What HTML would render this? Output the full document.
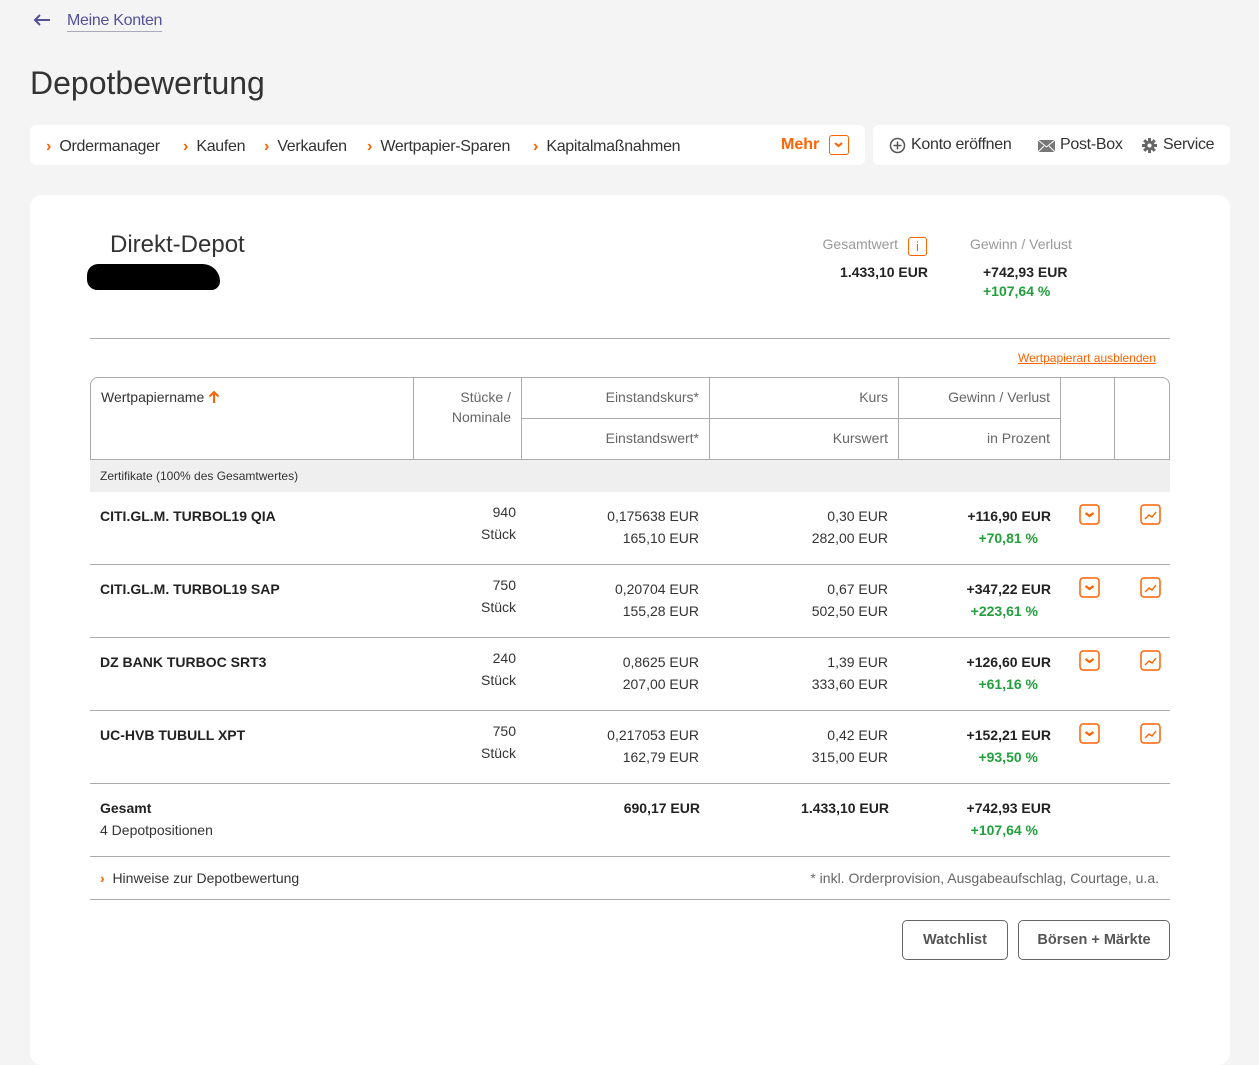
<!DOCTYPE html>
<html><head><meta charset="utf-8">
<style>
*{margin:0;padding:0;box-sizing:border-box}
body{width:1259px;height:1051px;background:#f4f4f4;font-family:"Liberation Sans",sans-serif;color:#333;position:relative;overflow:hidden;font-size:14px}
.a{position:absolute;white-space:nowrap;line-height:22px}
.r{text-align:right}
.b{font-weight:bold;color:#222}
.g{color:#22a03c;font-weight:bold}
.o{color:#ff6200}
.gr{color:#666}
.box{position:absolute;background:#fff}
.hl{position:absolute;height:1px;background:#aaa}
.vl{position:absolute;width:1px;background:#aaa}
.ib{position:absolute;width:20px;height:20px;border:1.5px solid #ff6200;border-radius:3px}
.btn{position:absolute;border:1px solid #666;border-radius:5px;background:#fff;font-weight:bold;color:#555;text-align:center;line-height:38px;font-size:14.5px}
.nv{font-size:16px;letter-spacing:-0.3px}
</style></head><body>

<svg style="position:absolute;left:33px;top:13px" width="18" height="14" viewBox="0 0 18 14"><path d="M17 7H2M7 2L2 7l5 5" stroke="#525199" stroke-width="2" fill="none"/></svg>
<div class="a" style="left:67px;top:10px;color:#525199;font-size:16px;border-bottom:1px solid #aab;line-height:21px;letter-spacing:-0.3px">Meine Konten</div>
<div class="a" style="left:30px;top:64px;font-size:32px;line-height:38px;color:#333">Depotbewertung</div>

<div class="box" style="left:30px;top:125px;width:835px;height:40px;border-radius:6px"></div>
<div class="a nv" style="left:46px;top:136px"><span class="o" style="font-weight:bold">›</span>&nbsp; Ordermanager</div>
<div class="a nv" style="left:183px;top:136px"><span class="o" style="font-weight:bold">›</span>&nbsp; Kaufen</div>
<div class="a nv" style="left:264px;top:136px"><span class="o" style="font-weight:bold">›</span>&nbsp; Verkaufen</div>
<div class="a nv" style="left:367px;top:136px"><span class="o" style="font-weight:bold">›</span>&nbsp; Wertpapier-Sparen</div>
<div class="a nv" style="left:533px;top:136px"><span class="o" style="font-weight:bold">›</span>&nbsp; Kapitalmaßnahmen</div>
<div class="a o" style="left:781px;top:134px;font-size:16px;font-weight:bold">Mehr</div>
<div class="ib" style="left:829px;top:135px"><svg width="17" height="17" viewBox="0 0 17 17" style="position:absolute;left:0;top:0"><path d="M5 7l3.5 3 3.5-3" stroke="#ff6200" stroke-width="2" fill="none"/></svg></div>

<div class="box" style="left:873px;top:125px;width:357px;height:40px;border-radius:6px"></div>
<svg style="position:absolute;left:889px;top:137px" width="17" height="17" viewBox="0 0 17 17"><circle cx="8.5" cy="8.5" r="7" stroke="#555" stroke-width="1.5" fill="none"/><path d="M8.5 4.5v8M4.5 8.5h8" stroke="#555" stroke-width="1.5"/></svg>
<div class="a nv" style="left:911px;top:134px">Konto eröffnen</div>
<svg style="position:absolute;left:1038px;top:140px" width="17" height="12" viewBox="0 0 17 12"><rect x="0" y="0" width="17" height="12" fill="#777"/><path d="M0 0l8.5 7 8.5-7M0 12l6-6M17 12l-6-6" stroke="#fff" stroke-width="1" fill="none"/></svg>
<div class="a nv" style="left:1060px;top:134px">Post-Box</div>
<svg style="position:absolute;left:1141px;top:137px" width="17" height="17" viewBox="0 0 17 17"><g stroke="#666" stroke-width="3"><path d="M8.5 1v15M1 8.5h15M3.2 3.2l10.6 10.6M13.8 3.2L3.2 13.8"/></g><circle cx="8.5" cy="8.5" r="5" fill="#666"/><circle cx="8.5" cy="8.5" r="2" fill="#fff"/></svg>
<div class="a nv" style="left:1163px;top:134px">Service</div>

<div class="box" style="left:30px;top:195px;width:1200px;height:870px;border-radius:12px"></div>
<div class="a" style="left:110px;top:230px;font-size:24px;line-height:30px;color:#333">Direkt-Depot</div>
<div style="position:absolute;left:87px;top:264px;width:133px;height:26px;background:#000;border-radius:13px 20px 10px 12px"></div>

<div class="a r" style="left:700px;width:198px;top:233px;color:#999;font-size:14px">Gesamtwert</div>
<div class="ib" style="left:908px;top:237px;width:19px;height:19px;color:#ff6200;font-size:13px;text-align:center;line-height:17px;border-width:1px">i</div>
<div class="a r b" style="left:700px;width:228px;top:261px">1.433,10 EUR</div>
<div class="a" style="left:970px;top:233px;color:#999">Gewinn / Verlust</div>
<div class="a b" style="left:983px;top:261px">+742,93 EUR</div>
<div class="a g" style="left:983px;top:280px">+107,64 %</div>

<div class="hl" style="left:90px;top:338px;width:1080px"></div>
<div class="a o" style="left:1018px;top:347px;font-size:12px;text-decoration:underline">Wertpapierart ausblenden</div>

<div style="position:absolute;left:90px;top:377px;width:1080px;height:83px;border:1px solid #aaa;border-radius:8px 8px 0 0"></div>
<div class="vl" style="left:413px;top:377px;height:83px"></div>
<div class="vl" style="left:521px;top:377px;height:83px"></div>
<div class="vl" style="left:709px;top:377px;height:83px"></div>
<div class="vl" style="left:898px;top:377px;height:83px"></div>
<div class="vl" style="left:1060px;top:377px;height:83px"></div>
<div class="vl" style="left:1114px;top:377px;height:83px"></div>
<div class="hl" style="left:521px;top:418px;width:540px"></div>
<div class="a" style="left:101px;top:386px;color:#333">Wertpapiername</div>
<svg style="position:absolute;left:208px;top:390px" width="12" height="14" viewBox="0 0 12 14"><path d="M6 13V2M1.5 6.5L6 2l4.5 4.5" stroke="#ff6200" stroke-width="2" fill="none"/></svg>
<div class="a r gr" style="left:400px;width:111px;top:386px">Stücke /</div>
<div class="a r gr" style="left:400px;width:111px;top:406px">Nominale</div>
<div class="a r gr" style="left:530px;width:169px;top:386px">Einstandskurs*</div>
<div class="a r gr" style="left:530px;width:169px;top:427px">Einstandswert*</div>
<div class="a r gr" style="left:720px;width:168px;top:386px">Kurs</div>
<div class="a r gr" style="left:720px;width:168px;top:427px">Kurswert</div>
<div class="a r gr" style="left:900px;width:150px;top:386px">Gewinn / Verlust</div>
<div class="a r gr" style="left:900px;width:150px;top:427px">in Prozent</div>

<div style="position:absolute;left:90px;top:460px;width:1080px;height:32px;background:#efefef"></div>
<div class="a" style="left:100px;top:465px;font-size:12px">Zertifikate (100% des Gesamtwertes)</div>

<div class="a b" style="left:100px;top:505px">CITI.GL.M. TURBOL19 QIA</div>
<div class="a r" style="left:400px;width:116px;top:501px">940</div>
<div class="a r" style="left:400px;width:116px;top:523px">Stück</div>
<div class="a r" style="left:530px;width:169px;top:505px">0,175638 EUR</div>
<div class="a r" style="left:530px;width:169px;top:527px">165,10 EUR</div>
<div class="a r" style="left:720px;width:168px;top:505px">0,30 EUR</div>
<div class="a r" style="left:720px;width:168px;top:527px">282,00 EUR</div>
<div class="a r b" style="left:900px;width:151px;top:505px">+116,90 EUR</div>
<div class="a r g" style="left:900px;width:138px;top:527px">+70,81 %</div>
<div class="hl" style="left:90px;top:564px;width:1080px"></div>

<div class="a b" style="left:100px;top:578px">CITI.GL.M. TURBOL19 SAP</div>
<div class="a r" style="left:400px;width:116px;top:574px">750</div>
<div class="a r" style="left:400px;width:116px;top:596px">Stück</div>
<div class="a r" style="left:530px;width:169px;top:578px">0,20704 EUR</div>
<div class="a r" style="left:530px;width:169px;top:600px">155,28 EUR</div>
<div class="a r" style="left:720px;width:168px;top:578px">0,67 EUR</div>
<div class="a r" style="left:720px;width:168px;top:600px">502,50 EUR</div>
<div class="a r b" style="left:900px;width:151px;top:578px">+347,22 EUR</div>
<div class="a r g" style="left:900px;width:138px;top:600px">+223,61 %</div>
<div class="hl" style="left:90px;top:637px;width:1080px"></div>

<div class="a b" style="left:100px;top:651px">DZ BANK TURBOC SRT3</div>
<div class="a r" style="left:400px;width:116px;top:647px">240</div>
<div class="a r" style="left:400px;width:116px;top:669px">Stück</div>
<div class="a r" style="left:530px;width:169px;top:651px">0,8625 EUR</div>
<div class="a r" style="left:530px;width:169px;top:673px">207,00 EUR</div>
<div class="a r" style="left:720px;width:168px;top:651px">1,39 EUR</div>
<div class="a r" style="left:720px;width:168px;top:673px">333,60 EUR</div>
<div class="a r b" style="left:900px;width:151px;top:651px">+126,60 EUR</div>
<div class="a r g" style="left:900px;width:138px;top:673px">+61,16 %</div>
<div class="hl" style="left:90px;top:710px;width:1080px"></div>

<div class="a b" style="left:100px;top:724px">UC-HVB TUBULL XPT</div>
<div class="a r" style="left:400px;width:116px;top:720px">750</div>
<div class="a r" style="left:400px;width:116px;top:742px">Stück</div>
<div class="a r" style="left:530px;width:169px;top:724px">0,217053 EUR</div>
<div class="a r" style="left:530px;width:169px;top:746px">162,79 EUR</div>
<div class="a r" style="left:720px;width:168px;top:724px">0,42 EUR</div>
<div class="a r" style="left:720px;width:168px;top:746px">315,00 EUR</div>
<div class="a r b" style="left:900px;width:151px;top:724px">+152,21 EUR</div>
<div class="a r g" style="left:900px;width:138px;top:746px">+93,50 %</div>
<div class="hl" style="left:90px;top:783px;width:1080px"></div>

<svg style="position:absolute;left:0;top:0" width="1259" height="800">
<g fill="none" stroke="#ff6200">
<rect x="1080" y="505" width="19" height="19" rx="3" stroke-width="1.5"/><rect x="1141" y="505" width="19" height="19" rx="3" stroke-width="1.5"/>
<rect x="1080" y="578" width="19" height="19" rx="3" stroke-width="1.5"/><rect x="1141" y="578" width="19" height="19" rx="3" stroke-width="1.5"/>
<rect x="1080" y="651" width="19" height="19" rx="3" stroke-width="1.5"/><rect x="1141" y="651" width="19" height="19" rx="3" stroke-width="1.5"/>
<rect x="1080" y="724" width="19" height="19" rx="3" stroke-width="1.5"/><rect x="1141" y="724" width="19" height="19" rx="3" stroke-width="1.5"/>
<path stroke-width="2.2" d="M1085.5 513l4 3 4-3M1085.5 586l4 3 4-3M1085.5 659l4 3 4-3M1085.5 732l4 3 4-3"/>
<path stroke-width="1.4" d="M1145 519l4-4 3 2 4-5M1145 592l4-4 3 2 4-5M1145 665l4-4 3 2 4-5M1145 738l4-4 3 2 4-5"/>
</g></svg>

<div class="a b" style="left:100px;top:797px">Gesamt</div>
<div class="a" style="left:100px;top:819px">4 Depotpositionen</div>
<div class="a r b" style="left:530px;width:170px;top:797px">690,17 EUR</div>
<div class="a r b" style="left:720px;width:169px;top:797px">1.433,10 EUR</div>
<div class="a r b" style="left:900px;width:151px;top:797px">+742,93 EUR</div>
<div class="a r g" style="left:900px;width:138px;top:819px">+107,64 %</div>
<div class="hl" style="left:90px;top:856px;width:1080px"></div>

<div class="a" style="left:100px;top:867px"><span class="o" style="font-weight:bold">›</span>&nbsp; Hinweise zur Depotbewertung</div>
<div class="a r gr" style="left:700px;width:459px;top:867px">* inkl. Orderprovision, Ausgabeaufschlag, Courtage, u.a.</div>
<div class="hl" style="left:90px;top:899px;width:1080px"></div>

<div class="btn" style="left:902px;top:920px;width:106px;height:40px">Watchlist</div>
<div class="btn" style="left:1018px;top:920px;width:152px;height:40px">Börsen + Märkte</div>
</body></html>
